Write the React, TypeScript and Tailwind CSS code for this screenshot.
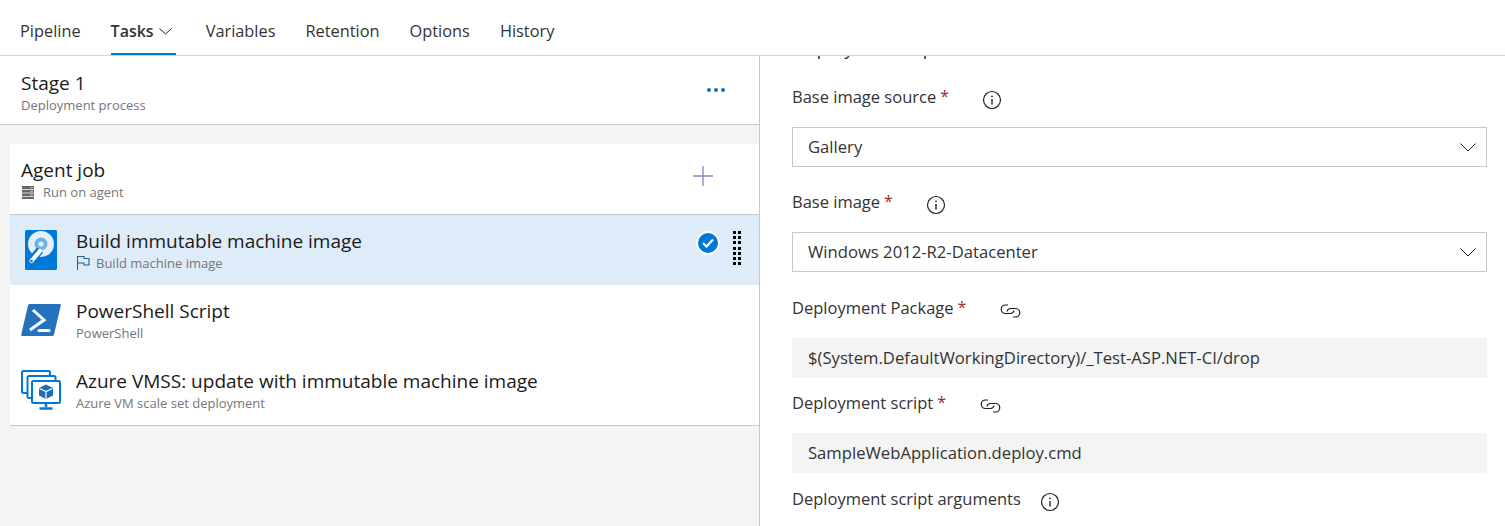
import React from 'react';

const tabs = ['Pipeline', 'Tasks', 'Variables', 'Retention', 'Options', 'History'];

const InfoIcon = () => (
    <svg width="20" height="20" viewBox="0 0 20 20" fill="none" stroke="#201f1e" className="shrink-0">
        <circle cx="10" cy="10" r="8.5" strokeWidth="1.2" />
        <path d="M10 9v5.5" strokeWidth="1.4" />
        <circle cx="10" cy="6.3" r="0.9" fill="#201f1e" stroke="none" />
    </svg>
);

const LinkIcon = () => (
    <svg width="21" height="14" viewBox="0 0 21 14" fill="none" stroke="#201f1e" strokeWidth="1.2" className="shrink-0">
        <path d="M8 1H5.500a4 4 0 0 0 0 8.500h5a3.600 3.600 0 0 0 3.500-3" />
        <path d="M13 13h2.500a4 4 0 0 0 0-8.500h-5a3.600 3.600 0 0 0-3.500 3" />
    </svg>
);

const SmallChevron = ({ width, height }: { width: number; height: number }) => (
    <svg width={width} height={height} viewBox={`0 0 ${width} ${height}`} fill="none" stroke="#201f1e" strokeWidth="1" className="shrink-0">
        <path d={`M0.500 0.500L${width / 2} ${height - 1}L${width - 0.5} 0.500`} />
    </svg>
);

const DiskIcon = () => (
    <svg width="32" height="40" viewBox="0 0 32 40">
        <rect x="0" y="0" width="32" height="40" rx="1.500" fill="#0078d7" />
        <circle cx="16" cy="14" r="13" fill="#e4f0fb" />
        <circle cx="16" cy="14" r="6.500" fill="#6fb0e6" />
        <circle cx="16" cy="14" r="2.600" fill="#e4f0fb" />
        <path d="M15 20L6 31" stroke="#0078d7" strokeWidth="8" />
        <path d="M15 21L6.500 31" stroke="#ffffff" strokeWidth="4.200" strokeLinecap="round" />
        <circle cx="6.500" cy="31" r="1.300" fill="#0078d7" />
    </svg>
);

const PowerShellIcon = () => (
    <svg width="40" height="34" viewBox="0 0 40 34">
        <path d="M9 1h29.500c1 0 1.500.6 1.300 1.500L33 31.500c-.3 1-1 1.500-2 1.500H1.500C.5 33 0 32.400.2 31.500L7 2.500C7.300 1.500 8 1 9 1z" fill="#2671be" />
        <path d="M12 7l11 10-14 10" fill="none" stroke="#ffffff" strokeWidth="3" />
        <path d="M18 27.500h10" stroke="#ffffff" strokeWidth="3" strokeLinecap="round" />
    </svg>
);

const VmssIcon = () => (
    <svg width="40" height="40" viewBox="0 0 40 40" fill="none">
        <rect x="1" y="1" width="28" height="22" rx="1.500" fill="#fff" stroke="#0078d7" strokeWidth="2" />
        <rect x="6.500" y="6" width="28" height="22" rx="1.500" fill="#fff" stroke="#0078d7" strokeWidth="2" />
        <rect x="11" y="11" width="28" height="22" rx="1.500" fill="#fff" stroke="#0078d7" strokeWidth="2" />
        <path d="M25 14.500l7 3.500v7.500l-7 3.500-7-3.500V18z" fill="#1c6fb8" />
        <path d="M18.500 18.500l6.500 3 6.500-3M25 21.500V29" stroke="#fff" strokeWidth="1.200" />
        <path d="M25 33v4M18.500 38.500h13" stroke="#0078d7" strokeWidth="2.500" />
    </svg>
);

const ServerIcon = () => (
    <svg width="12" height="13" viewBox="0 0 12 13" className="shrink-0 ml-[1px]">
        <rect x="0" y="0" width="12" height="13" fill="#6b6464" />
        <path d="M0 3.500h12M0 7h12M0 10.500h12" stroke="#f4f4f4" strokeWidth="0.8" />
        <path d="M8 1.700h3M8 5.300h3M8 8.800h3" stroke="#d0d0d0" strokeWidth="0.8" />
    </svg>
);

const FlagIcon = () => (
    <svg width="13" height="14" viewBox="0 0 13 14" fill="none" stroke="#1f5f8f" strokeWidth="1.100" className="shrink-0 ml-[1px]">
        <path d="M.5 14V.5h6.500v2h5v6.500H7V7H.5" />
    </svg>
);

const Label = ({ text, required, icon, gap }: { text: string; required?: boolean; icon: React.ReactNode; gap: string }) => (
    <div className="flex items-center h-[30px]">
        <span className="text-[16.5px] text-[#333333]">{text}</span>
        {required && <span className="text-[16px] text-[#a4262c] ml-[4px] -mt-[2px]">*</span>}
        <span className={`flex items-center mt-[6px] ${gap}`}>{icon}</span>
    </div>
);

const SelectBox = ({ value }: { value: string }) => (
    <div className="h-[40px] border border-[#c8c8c8] flex items-center justify-between pl-[15px] pr-[10px] text-[16.65px] text-[#333333]">
        <span className="pt-[1px]">{value}</span>
        <SmallChevron width={16} height={9} />
    </div>
);

const ReadOnlyBox = ({ value }: { value: string }) => (
    <div className="h-[40px] bg-[#f4f4f4] flex items-center pl-[16px] text-[16.65px] text-[#333333]">{value}</div>
);

const TaskRow = ({ icon, title, sub, selected, flag }: { icon: React.ReactNode; title: string; sub: string; selected?: boolean; flag?: boolean }) => (
    <div className={`h-[70px] flex items-center ${selected ? 'bg-[#deecf9]' : 'bg-white'}`}>
        <div className="w-[62px] mr-[4px] shrink-0 flex justify-center">{icon}</div>
        <div className="flex-1 min-w-0">
            <div className="text-[19px] leading-[26px] text-[#1a1a1a]">{title}</div>
            <div className="flex items-center gap-[6px] text-[13px] leading-[18px] text-[#767676]">
                {flag && <FlagIcon />}
                <span>{sub}</span>
            </div>
        </div>
        {selected && (
            <div className="flex items-center pr-[18px]">
                <div className="w-[24px] h-[24px] mb-[14px] rounded-full bg-[#0078d4] border-2 border-white flex items-center justify-center">
                    <svg width="12" height="10" viewBox="0 0 12 10" fill="none" stroke="#fff" strokeWidth="2.200">
                        <path d="M1 5l3.500 3.500L11 1.500" />
                    </svg>
                </div>
                <div className="grid grid-cols-2 gap-x-[2px] gap-y-[2.330px] ml-[13px] mb-[4px]">
                    {Array.from({ length: 14 }).map((_, i) => (
                        <span key={i} className="w-[3px] h-[3px] bg-black" />
                    ))}
                </div>
            </div>
        )}
    </div>
);

export default function App() {
    return (
        <div className="w-[1505px] h-[526px] overflow-hidden bg-white flex flex-col font-['Open_Sans','Noto_Sans',sans-serif]">
            <div className="h-[56px] shrink-0 border-b border-[#d4d4d4] flex items-stretch pl-[20px] gap-[30px]">
                {tabs.map(tab => (
                    <div key={tab} className={`relative flex items-center pt-[7px] text-[#333333] ${tab === 'Tasks' ? 'font-semibold text-[16px] pr-[4px]' : 'text-[16.35px]'}`}>
                        {tab}
                        {tab === 'Tasks' && (
                            <>
                                <span className="ml-[5px] mt-[1px] flex"><SmallChevron width={13} height={7} /></span>
                                <span className="absolute left-0 right-0 bottom-0 h-[2px] bg-[#0078d4]" />
                            </>
                        )}
                    </div>
                ))}
            </div>
            <div className="flex flex-1 min-h-0">
                <div className="w-[760px] shrink-0 border-r border-[#c8c8c8] bg-[#f4f4f4]">
                    <div className="h-[69px] pt-[4px] bg-white border-b border-[#c8c8c8] flex items-center justify-between pl-[21px] pr-[34px]">
                        <div>
                            <div className="text-[19px] leading-[26px] text-[#1a1a1a]">Stage 1</div>
                            <div className="text-[13px] leading-[18px] text-[#767676]">Deployment process</div>
                        </div>
                        <div className="flex gap-[3px] -mt-[4px]">
                            <span className="w-[4px] h-[4px] rounded-full bg-[#106ebe]" />
                            <span className="w-[4px] h-[4px] rounded-full bg-[#106ebe]" />
                            <span className="w-[4px] h-[4px] rounded-full bg-[#106ebe]" />
                        </div>
                    </div>
                    <div className="ml-[10px] mt-[19px] bg-white border-b border-[#c8c8c8]">
                        <div className="h-[71px] border-b border-[#c8c8c8] flex items-center justify-between pl-[11px] pr-[46px]">
                            <div>
                                <div className="text-[19px] leading-[26px] text-[#1a1a1a]">Agent job</div>
                                <div className="flex items-center gap-[9px] text-[13px] leading-[18px] text-[#767676]">
                                    <ServerIcon />
                                    <span>Run on agent</span>
                                </div>
                            </div>
                            <svg width="20" height="20" viewBox="0 0 20 20" stroke="#8a80c8" strokeWidth="1.300" className="shrink-0 mb-[6px]">
                                <path d="M10 0v20M0 10h20" />
                            </svg>
                        </div>
                        <TaskRow selected flag icon={<DiskIcon />} title="Build immutable machine image" sub="Build machine image" />
                        <TaskRow icon={<PowerShellIcon />} title="PowerShell Script" sub="PowerShell" />
                        <TaskRow icon={<VmssIcon />} title="Azure VMSS: update with immutable machine image" sub="Azure VM scale set deployment" />
                    </div>
                </div>
                <div className="flex-1 min-w-0 overflow-hidden pl-[32px] pr-[18px]">
                    <div className="-mt-[19px] h-[22px] text-[19px] text-[#333333] leading-[22px] whitespace-nowrap">Deployment Inputs</div>
                    <div className="mt-[23px]">
                        <Label text="Base image source" required icon={<InfoIcon />} gap="ml-[33px]" />
                        <div className="mt-[15px]"><SelectBox value="Gallery" /></div>
                    </div>
                    <div className="mt-[20px]">
                        <Label text="Base image" required icon={<InfoIcon />} gap="ml-[33px]" />
                        <div className="mt-[15px]"><SelectBox value="Windows 2012-R2-Datacenter" /></div>
                    </div>
                    <div className="mt-[21px]">
                        <Label text="Deployment Package" required icon={<LinkIcon />} gap="ml-[34px]" />
                        <div className="mt-[15px]"><ReadOnlyBox value="$(System.DefaultWorkingDirectory)/_Test-ASP.NET-CI/drop" /></div>
                    </div>
                    <div className="mt-[10px]">
                        <Label text="Deployment script" required icon={<LinkIcon />} gap="ml-[34px]" />
                        <div className="mt-[15px]"><ReadOnlyBox value="SampleWebApplication.deploy.cmd" /></div>
                    </div>
                    <div className="mt-[11px]">
                        <Label text="Deployment script arguments" icon={<InfoIcon />} gap="ml-[19px]" />
                    </div>
                </div>
            </div>
        </div>
    );
}
